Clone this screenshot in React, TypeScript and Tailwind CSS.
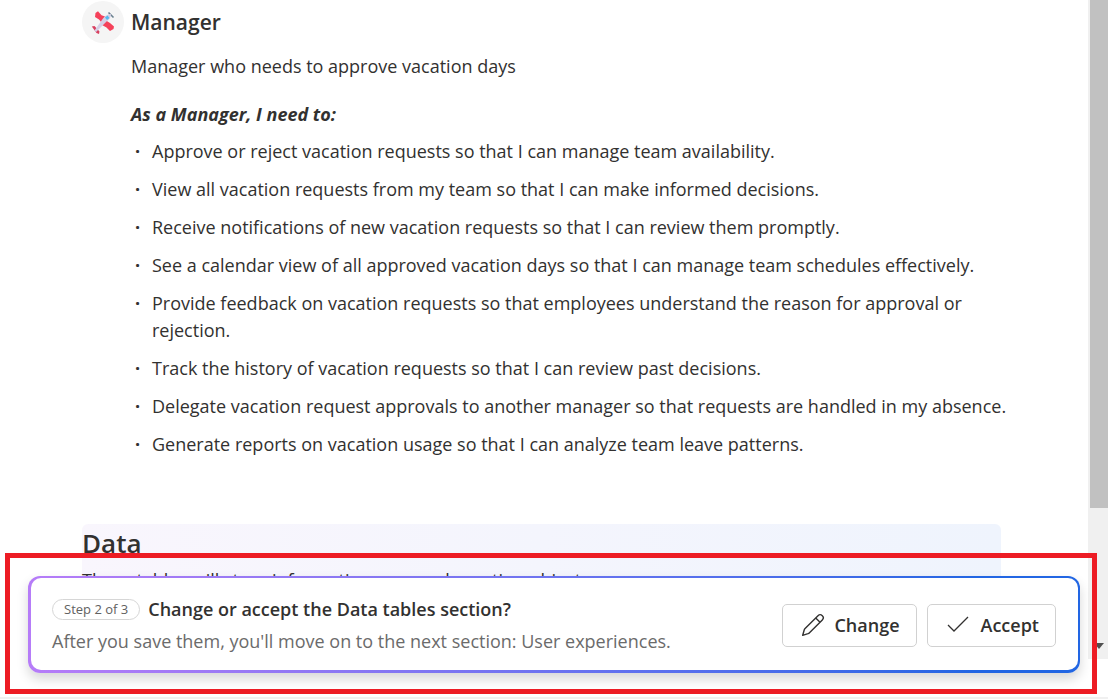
import clsx from "clsx";

const needs = [
  "Approve or reject vacation requests so that I can manage team availability.",
  "View all vacation requests from my team so that I can make informed decisions.",
  "Receive notifications of new vacation requests so that I can review them promptly.",
  "See a calendar view of all approved vacation days so that I can manage team schedules effectively.",
  "Provide feedback on vacation requests so that employees understand the reason for approval or rejection.",
  "Track the history of vacation requests so that I can review past decisions.",
  "Delegate vacation request approvals to another manager so that requests are handled in my absence.",
  "Generate reports on vacation usage so that I can analyze team leave patterns.",
];

const PlaneIcon = () => (
  <svg viewBox="0 0 24 24" className="size-6" aria-hidden="true">
    <path d="M4.500 3 7 1.200l3.500 4 5 1.800-5 5.500L8 9.500 4 7z" fill="#f5415a" />
    <path d="m15 10.500 4 2.500 4 3.500-.5 2.500-3.500 2-3.500-3.500-4.500-2.500z" fill="#f5415a" />
    <path d="M.8 16.500 3.500 16l5 5.500L8 24l-2.500-1z" fill="#d84060" />
    <path d="M17.500 2.500 22.500 7.500" stroke="#69808e" strokeWidth="1.600" />
    <path d="M3.500 20.500 12 8.500c2-3 5-4.500 8-4.500 0 3-1.500 5.500-4.500 7.500L5 22z" fill="#d5cfe6" />
    <path d="m14 7.500 2.500-2 2 2.500-2.500 2z" fill="#55b9ed" />
  </svg>
);

const PencilIcon = () => (
  <svg viewBox="0 0 24 24" className="size-6" fill="none" stroke="currentColor" strokeWidth="1.400" aria-hidden="true">
    <path
      d="M17 2.700a2.980 2.980 0 0 1 4.300 4.300L8.500 19.800c-.4.400-.9.700-1.500.900L1.700 22.300l1.500-5.300c.2-.6.500-1.100.9-1.500z"
      strokeLinejoin="round"
    />
    <path d="m14.700 5 4.300 4.300" />
  </svg>
);

const CheckIcon = () => (
  <svg viewBox="0 0 24 24" className="size-6" fill="none" stroke="currentColor" strokeWidth="1.300" aria-hidden="true">
    <path d="m2 12 6 6L22 4" />
  </svg>
);

const ActionButton = ({ label, icon, className }: { label: string; icon: React.ReactNode; className?: string }) => (
  <button
    type="button"
    className={clsx(
      "flex items-center rounded-[5px] border border-[#d1d1d1] bg-white py-2 pr-4 pl-[18px] text-lg leading-[25px] font-semibold hover:bg-gray-50",
      className,
    )}
  >
    {icon}
    {label}
  </button>
);

const App = () => {
  return (
    <div className="relative flex h-screen flex-col overflow-hidden border-b-2 border-[#f0f0f0] bg-white font-['Open_Sans',sans-serif] text-[#323130]">
      <div className="flex min-h-0 flex-1">
        <main className="min-w-0 flex-1 overflow-hidden pr-20 pl-[82px]">
          <section className="flex gap-[7px]">
            <div className="mt-px flex size-[42px] shrink-0 items-center justify-center rounded-full bg-[#f5f5f5]">
              <PlaneIcon />
            </div>
            <div className="min-w-0 pt-2">
              <h2 className="text-[21px] leading-7 font-semibold">Manager</h2>
              <p className="mt-4 text-lg leading-7">Manager who needs to approve vacation days</p>
              <h3 className="mt-5 text-lg leading-7 font-bold italic">As a Manager, I need to:</h3>
              <ul className="mt-[10px] flex flex-col gap-[11px]">
                {needs.map((need) => (
                  <li key={need} className="flex text-lg leading-[27px]">
                    <span className="w-[21px] shrink-0 pl-1 font-bold">·</span>
                    {need}
                  </li>
                ))}
              </ul>
            </div>
          </section>
          <section className="mt-[66px] mr-[7px] rounded-md bg-linear-to-r from-[#f9f6fd] to-[#eff4fd] pb-8">
            <h2 className="pt-[3px] text-[26px] leading-8 font-semibold">Data</h2>
            <p className="mt-[7px] text-lg leading-7">These tables will store information user and vacation objects</p>
          </section>
        </main>

        <div className="mb-[38px] flex w-5 flex-col justify-between bg-[#f0f0f0] pl-[2px]">
          <div className="h-[508px] bg-[#c1c1c1]" />
          <svg viewBox="0 0 10 6" className="mb-[10px] ml-1 h-[6px] w-[10px]" aria-hidden="true">
            <path d="M0 0h10L5 6z" fill="#505050" />
          </svg>
        </div>
      </div>

      {/* confirmation card floats over the page */}
      <div className="absolute right-[28px] bottom-[24px] left-[28px] rounded-xl bg-linear-to-r from-[#b67cf8] via-[#5b70ee] via-60% to-[#2266e3] to-90% pt-[2px] pr-[2px] pb-[3px] pl-[3px] shadow-[0_6px_12px_rgba(0,0,0,0.16)]">
        <div className="flex items-center justify-between rounded-[10px] bg-white pt-[19px] pr-[22px] pb-[17px] pl-[21px]">
          <div>
            <div className="flex items-center gap-2">
              <span className="rounded-full border border-[#d6d6d6] px-[11px] text-[13px] leading-[19px] text-[#616161]">
                Step 2 of 3
              </span>
              <h2 className="text-lg leading-6 font-semibold">Change or accept the Data tables section?</h2>
            </div>
            <p className="mt-2 text-lg leading-6 text-[#6b6b6b]">
              After you save them, you'll move on to the next section: User experiences.
            </p>
          </div>
          <div className="flex gap-[10px]">
            <ActionButton label="Change" icon={<PencilIcon />} className="gap-[9px]" />
            <ActionButton label="Accept" icon={<CheckIcon />} className="gap-[11px]" />
          </div>
        </div>
      </div>

      <div className="pointer-events-none absolute top-[553px] right-[11px] bottom-[3px] left-[5px] border-5 border-[#ed1c24]" />
    </div>
  );
};

export default App;
